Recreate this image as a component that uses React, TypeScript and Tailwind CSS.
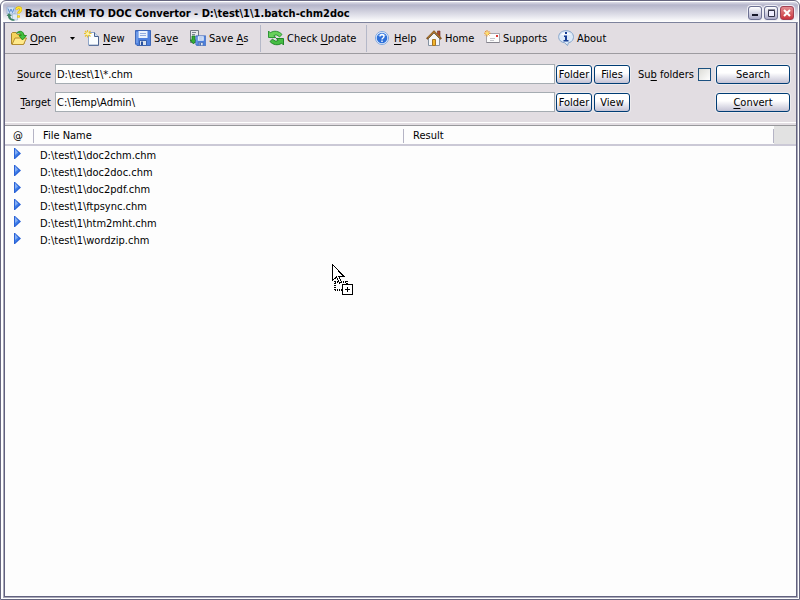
import type { ReactNode } from "react";

const files = ["doc2chm", "doc2doc", "doc2pdf", "ftpsync", "htm2mht", "wordzip"];

function Svg({ children }: { children: ReactNode }) {
  return (
    <svg aria-hidden="true" width="16" height="16" viewBox="0 0 16 16" className="shrink-0">
      {children}
    </svg>
  );
}

const AppIcon = () => (
  <Svg>
    <path d="M1 1h8v7H1z" fill="#cfe0f4" stroke="#8fabd0" strokeWidth=".7" />
    <path d="M2 2.500l1.500 4L5 3l1.500 3.500L8 2.500" fill="none" stroke="#5c8fd0" />
    <path d="M6.500 8h5v6h-5z" fill="#dfeaf6" stroke="#a3b8d2" strokeWidth=".7" />
    <path d="M10.500 3.500C11 1 15 1 15 3.500c0 2-2.500 2-2.500 4M12.500 9.500v2" fill="none" stroke="#d0a000" strokeWidth="2.600" />
    <path d="M10.500 3.500C11 1 15 1 15 3.500c0 2-2.500 2-2.500 4M12.500 9.500v2" fill="none" stroke="#ffe52e" strokeWidth="1.800" />
    <path d="M.5 10L3 7l3 3H4.300c.2 2 1.500 3.200 4.200 3.500v1.300C4.500 15 2 13 2 10z" fill="#3f8463" />
  </Svg>
);

const OpenIcon = () => (
  <Svg>
    <path d="M.5 14V3.500l1-1h3.500l1.500 2H13v9.500z" fill="#f5d45c" stroke="#a9862c" />
    <path d="M1 14.500L4 8h11.500L12.500 14.500z" fill="#ffe98a" stroke="#b48c30" />
    <path d="M5.500 3C9 0 12.500 1 13 5.500h2.500L11.500 10 8 5.500h2.300C10 3.500 8.500 2.500 5.500 3z" fill="#43c23f" stroke="#16841b" strokeWidth=".8" />
  </Svg>
);

const NewIcon = () => (
  <Svg>
    <path d="M4.500 2.500h6l4 4v8.800h-10z" fill="#fafdff" stroke="#8fa5c8" />
    <path d="M10.500 2.500v4h4v8.800H5" fill="none" stroke="#4b6390" />
    <path d="M11 3v3h3z" fill="#cbdcf0" />
    <path d="M3.500 0v7.500M0 3.500h7.500M1 1l5.500 5.500M6.500 1L1 6.500" stroke="#e9c22d" strokeWidth="1.100" />
    <circle cx="3.700" cy="3.700" r="1.700" fill="#fff5a2" />
  </Svg>
);

const Floppy = () => (
  <>
    <path d="M.5.500h15v15H2L.5 14z" fill="#4d80de" stroke="#3f68b8" />
    <path d="M3.500 1h9v7h-9z" fill="#eaf2fd" />
    <path d="M5 3.500h6M5 5.500h6" stroke="#91ace0" />
    <path d="M4.500 10.500h7v5h-7z" fill="#dde4ee" stroke="#3a61ac" />
    <path d="M6 11.500h2V15H6z" fill="#2a52a0" />
    <path d="M2 2v11" stroke="#8eb3f2" />
  </>
);

const SaveIcon = () => (
  <Svg>
    <Floppy />
  </Svg>
);

const SaveAsIcon = () => (
  <Svg>
    <path d="M.5.500h8v12h-8z" fill="#e7e9ed" stroke="#6f7883" />
    <path d="M2 2.500h4M2 4.500h3" stroke="#7c8794" />
    <path d="M2 6h3v4h1.500L3.500 14 .3 10H2z" fill="#35ad35" stroke="#167a22" strokeWidth=".8" />
    <g transform="translate(5.500 5.500) scale(.66)">
      <Floppy />
    </g>
  </Svg>
);

const UpdateIcon = () => (
  <Svg>
    <path d="M.5 1l1.800 1.800C6 .2 11 1 14 4.500L11.500 7C9.500 4.700 7.500 4.300 5.800 5.800L7.800 7.500H.5z" fill="#69d15b" stroke="#218d2b" strokeWidth=".9" />
    <path d="M15.500 15l-1.800-1.800C10 15.800 5 15 2 11.500L4.500 9c2 2.300 4 2.700 5.700 1.200L8.200 8.500h7.300z" fill="#46bd43" stroke="#17801f" strokeWidth=".9" />
  </Svg>
);

const HelpIcon = () => (
  <Svg>
    <circle cx="7" cy="8" r="6.500" fill="#edf5ff" stroke="#7ea6df" />
    <circle cx="7" cy="8" r="5.300" fill="#2f70d9" />
    <path d="M3 6C4.500 2.500 9.500 2.500 11 6z" fill="#78a9ef" />
    <path d="M5 6.500c0-2.700 4-2.500 4 0C9 8 7 8 7 9.500M7 10.500V12" fill="none" stroke="#fff" strokeWidth="1.400" />
  </Svg>
);

const HomeIcon = () => (
  <Svg>
    <path d="M11.500 1H14v6h-2.500z" fill="#a94a31" stroke="#6b2d23" strokeWidth=".6" />
    <path d="M2.500 8.500L8 3l5.500 5.500v7h-11z" fill="#f4f5f7" stroke="#8592a2" />
    <path d="M.8 9L8 1.600 15.200 9" fill="none" stroke="#744918" strokeWidth="2" />
    <path d="M1.500 8L8 1.600 14.500 8" fill="none" stroke="#d99a44" strokeWidth=".9" />
    <path d="M6.500 9.500h3v6h-3z" fill="#f1b52e" stroke="#a87422" />
  </Svg>
);

const MailIcon = () => (
  <Svg>
    <path d="M2.500 3.500h13v9h-13z" fill="#fcfcfc" stroke="#a6a4ac" />
    <path d="M2.500 12.500h13" stroke="#85838d" />
    <path d="M12 5h2v2h-2z" fill="#e23834" />
    <path d="M6 8.500h5M6 10.500h4" stroke="#c4c4ca" />
    <path d="M3 0v6.500M0 3.200h6.500M1 1l4.500 4.500M5.500 1L1 5.500" stroke="#ee982c" />
    <circle cx="3.200" cy="3.200" r="1.500" fill="#ffe36e" />
  </Svg>
);

const AboutIcon = () => (
  <Svg>
    <path d="M8 .7c9.500 0 9.500 11 2.500 12L9.500 15.500 6.500 12.700C-2 11.700-1 .7 8 .7z" fill="#dceaf9" stroke="#86a5cb" />
    <path d="M3 5C5 1.500 10.500 1.500 13 5 9 4 6 5 3 5z" fill="#fff" />
    <path d="M7 2h2v2H7zM6 5.500h3V10h1.500v1.500h-5V10H7V7H6z" fill="#173f95" />
  </Svg>
);

function Tool({ icon, children, width }: { icon: ReactNode; children: ReactNode; width: string }) {
  return (
    <button type="button" className={`flex h-6 shrink-0 items-center gap-[3px] whitespace-nowrap ${width}`}>
      {icon}
      <span>{children}</span>
    </button>
  );
}

function U({ children }: { children: ReactNode }) {
  return <span className="underline decoration-1 underline-offset-2">{children}</span>;
}

function XpButton({ children, width }: { children: ReactNode; width: string }) {
  return (
    <button
      type="button"
      className={`h-[19px] shrink-0 rounded-[3px] border border-[#003c74] bg-linear-to-b from-white from-40% to-[#c4c3d5] text-center leading-[17px] whitespace-nowrap shadow-[0_0_0_1px_#edebee] ${width}`}
    >
      {children}
    </button>
  );
}

const captionButton = "flex h-[14px] w-[14px] items-center justify-center rounded-[3px] border shadow-[0_0_0_1px_#eeeef4]";
const fieldClass = "h-5 min-w-0 grow border border-[#a5acb2] bg-[#fdfdfd] px-px outline-none";
const headClass = "h-[14px] border-r border-[#b5b4c5] leading-[14px]";

export default function App() {
  return (
    <div className="flex h-screen flex-col overflow-hidden rounded-t-[6px] border border-[#66667f] bg-white p-px pl-[2px] font-['DejaVu_Sans_Condensed','DejaVu_Sans',sans-serif] text-[11px] leading-[17px] text-black">
      <header className="flex h-[20px] shrink-0 items-center gap-[3px] rounded-t-[4px] bg-linear-to-b from-[#dedee8] via-[#b5b5ca] via-15% to-white pt-[3px] pr-1 pl-[3px]">
        <AppIcon />
        <h1 className="grow truncate font-bold">Batch CHM TO DOC Convertor - D:\test\1\1.batch-chm2doc</h1>
        <div className="flex gap-[2px] pb-[2px]">
          <button type="button" aria-label="Minimize" className={`${captionButton} border-[#6d7193] bg-linear-to-b from-white to-[#aaaac8]`}>
            <svg width="10" height="10" viewBox="0 0 10 10"><path d="M2 7h6" stroke="#171729" strokeWidth="2" /></svg>
          </button>
          <button type="button" aria-label="Maximize" className={`${captionButton} border-[#6d7193] bg-linear-to-b from-white to-[#aaaac8]`}>
            <svg width="10" height="10" viewBox="0 0 10 10"><path d="M2.500 2.500h6v6h-6z" fill="#eef" stroke="#333348" /><path d="M2 2h7" stroke="#333348" /></svg>
          </button>
          <button type="button" aria-label="Close" className={`${captionButton} border-[#a34053] bg-linear-to-b from-[#e28b91] to-[#c9303c]`}>
            <svg width="10" height="10" viewBox="0 0 10 10"><path d="M2 2l6 6M8 2L2 8" stroke="#fff" strokeWidth="2" /></svg>
          </button>
        </div>
      </header>

      <div className="flex min-h-0 grow flex-col border border-[#a9a9b9] border-t-[#7d829c]">
        <div className="flex min-h-0 grow flex-col border border-t-0 border-[#62627f] bg-[#e2dde2]">
          <nav aria-label="Toolbar" className="flex h-[31px] shrink-0 items-center border-b border-[#9d9ba0] pl-[6px]">
            <Tool icon={<OpenIcon />} width="w-[53px]"><U>O</U>pen</Tool>
            <button type="button" aria-label="Open recent" className="h-6 w-[20px]">
              <svg width="5" height="3" viewBox="0 0 5 3" className="ml-[6px]"><path d="M0 0h5L2.500 3z" /></svg>
            </button>
            <Tool icon={<NewIcon />} width="w-[51px]"><U>N</U>ew</Tool>
            <Tool icon={<SaveIcon />} width="w-[55px]">Sa<U>v</U>e</Tool>
            <Tool icon={<SaveAsIcon />} width="w-[70px]">Save <U>A</U>s</Tool>
            <div className="mr-[7px] h-[27px] w-px bg-[#b5b8c8]" />
            <Tool icon={<UpdateIcon />} width="w-[98px]">Check <U>U</U>pdate</Tool>
            <div className="mr-[8px] h-[27px] w-px bg-[#b5b8c8]" />
            <Tool icon={<HelpIcon />} width="w-[51px]"><U>H</U>elp</Tool>
            <Tool icon={<HomeIcon />} width="w-[58px]">Home</Tool>
            <Tool icon={<MailIcon />} width="w-[74px]">Supports</Tool>
            <Tool icon={<AboutIcon />} width="w-[58px]">About</Tool>
          </nav>

          <form className="flex shrink-0 flex-col gap-2 border-b border-white pt-[10px] pr-[6px] pb-[10px] pl-[5px]" onSubmit={(e) => e.preventDefault()}>
            <div className="flex items-center">
              <label htmlFor="source" className="mr-1 w-[41px] shrink-0 pt-px text-right"><U>S</U>ource</label>
              <input id="source" defaultValue="D:\test\1\*.chm" className={fieldClass} />
              <div className="ml-px flex gap-[2px]">
                <XpButton width="w-9">Folder</XpButton>
                <XpButton width="w-9">Files</XpButton>
              </div>
              <div className="flex w-[86px] shrink-0 items-center justify-between pr-[5px] pl-2">
                <label htmlFor="sub" className="whitespace-nowrap">Su<U>b</U> folders</label>
                <input id="sub" type="checkbox" className="size-[13px] shrink-0 appearance-none border border-[#1c5180] bg-linear-to-br from-[#dcdcd7] to-white checked:bg-[#1c5180]" />
              </div>
              <XpButton width="w-[74px]">Search</XpButton>
            </div>
            <div className="flex items-center">
              <label htmlFor="target" className="mr-1 w-[41px] shrink-0 pt-px text-right"><U>T</U>arget</label>
              <input id="target" defaultValue="C:\Temp\Admin\" className={fieldClass} />
              <div className="mr-[86px] ml-px flex gap-[2px]">
                <XpButton width="w-9">Folder</XpButton>
                <XpButton width="w-9">View</XpButton>
              </div>
              <XpButton width="w-[74px]"><U>C</U>onvert</XpButton>
            </div>
          </form>

          <main className="relative mt-[2px] grow border-t border-[#98989c] bg-[#fdfdfd]">
            <table className="w-full table-fixed border-collapse text-left">
              <colgroup>
                <col className="w-[29px]" />
                <col className="w-[370px]" />
                <col />
                <col className="w-[22px]" />
              </colgroup>
              <thead>
                <tr className="h-[19px] border-b-2 border-[#cbc9d6]">
                  <th className="p-0 pt-px font-normal"><div className={`${headClass} pl-2`}>@</div></th>
                  <th className="p-0 pt-px font-normal"><div className={`${headClass} pl-[9px]`}>File Name</div></th>
                  <th className="p-0 pt-px font-normal"><div className={`${headClass} pl-[9px]`}>Result</div></th>
                  <td className="bg-[#e2e2e2] p-0" />
                </tr>
              </thead>
              <tbody>
                {files.map((name) => (
                  <tr key={name} className="h-[17px] leading-[15px]">
                    <td className="p-0 pl-[9px]">
                      <svg aria-hidden="true" width="7" height="11" viewBox="0 0 7 11" className="mb-[2px] block">
                        <path d="M0 0h1l6 5.500L1 11H0z" fill="#2a62d6" />
                        <path d="M1 1v8.500L5 5.500z" fill="#3f80ea" />
                        <path d="M1 1v6l3-2.500z" fill="#84aef4" />
                      </svg>
                    </td>
                    <td className="p-0 pt-[2px] pl-[6px]">{`D:\\test\\1\\${name}.chm`}</td>
                    <td className="p-0" />
                    <td className="p-0" />
                  </tr>
                ))}
              </tbody>
            </table>
            <svg aria-hidden="true" width="22" height="32" viewBox="0 0 22 32" shapeRendering="crispEdges" className="absolute top-[138px] left-[327px]">
              <path d="M3 17.500h12M2.500 17v9M3 25.500h8M14.500 17v4" fill="none" stroke="#000" strokeDasharray="1 1" strokeWidth="2" />
              <path d="M.5.500v16l4-3.500 3 6 2-1-3-6h5z" fill="#fff" stroke="#000" />
              <path d="M10.500 20.500h10v10h-10z" fill="#fff" stroke="#000" />
              <path d="M13 25.500h5M15.500 23v5" stroke="#000" />
            </svg>
          </main>
        </div>
      </div>
    </div>
  );
}
